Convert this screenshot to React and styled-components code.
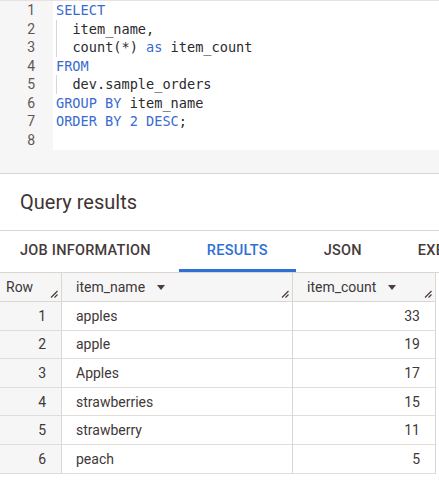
import React from "react";
import styled, { createGlobalStyle } from "styled-components";

const Global = createGlobalStyle`
  html, body { margin: 0; padding: 0; background: #fff; }
  body { font-family: Roboto, "Noto Sans", Arial, sans-serif; color: #3f3838; }
`;

const Page = styled.div`
  width: 439px;
  height: 481px;
  overflow: hidden;
  display: flex;
  flex-direction: column;
`;

const Editor = styled.div`
  display: flex;
  border-top: 1px solid #e6e2e0;
  height: 149px;
`;

const Gutter = styled.div`
  width: 53px;
  background: #f6f6f7;
  box-sizing: border-box;
  padding-right: 18px;
  display: flex;
  flex-direction: column;
  align-items: flex-end;
`;

const LineNo = styled.div`
  height: 18.5px;
  line-height: 18.5px;
  font-family: Roboto, sans-serif;
  font-size: 14px;
  color: #5f5656;
`;

const Code = styled.div`
  flex: 1;
  padding-left: 3px;
  display: flex;
  flex-direction: column;
`;

const CodeLine = styled.div`
  height: 18.5px;
  line-height: 18.5px;
  font-family: "DejaVu Sans Mono", "Liberation Mono", monospace;
  font-size: 13.6px;
  white-space: pre;
  color: #2b2a2e;
`;

const Indent = styled.span`
  display: inline-block;
  vertical-align: top;
  width: 16.4px;
  height: 18.5px;
  border-left: 1px solid #d8d6d6;
  box-sizing: border-box;
`;

const Kw = styled.span`
  color: #3a6bcf;
`;

const Strip = styled.div`
  height: 23px;
  background: #f6f6f7;
  border-bottom: 1px solid #dcd6d0;
`;

const Heading = styled.h2`
  margin: 0;
  height: 57px;
  display: flex;
  align-items: center;
  padding-left: 20px;
  font-size: 20px;
  font-weight: 400;
  color: #3f3434;
  border-bottom: 1px solid #dcd6d0;
  box-sizing: border-box;
`;

const Tabs = styled.div`
  display: flex;
  height: 41px;
  white-space: nowrap;
`;

const Tab = styled.div`
  display: flex;
  align-items: center;
  padding: 0 28px;
  font-size: 14.5px;
  font-weight: 500;
  letter-spacing: 0.25px;
  text-transform: uppercase;
  color: ${(p) => (p.$active ? "#2f6fd6" : "#453b3b")};
  border-bottom: 3px solid ${(p) => (p.$active ? "#2f6fd6" : "transparent")};
  &:first-child { padding-left: 20px; }
`;

const Table = styled.div`
  display: grid;
  grid-template-columns: 62px 231px 143px;
  border-top: 1px solid #dcd6d0;
`;

const HeadCell = styled.div`
  position: relative;
  height: 29px;
  display: flex;
  align-items: center;
  padding-left: ${(p) => p.$pl || 14}px;
  background: #f6f6f7;
  border-right: 1px solid #dcd6d0;
  border-bottom: 1px solid #dcd6d0;
  font-size: 14px;
  color: #3f3838;
  box-sizing: border-box;
`;

const Caret = styled.span`
  display: inline-block;
  margin-left: 12px;
  width: 0;
  height: 0;
  border-left: 4.5px solid transparent;
  border-right: 4.5px solid transparent;
  border-top: 5px solid #4a3c3c;
  margin-top: 1px;
`;

const Grip = styled.svg`
  position: absolute;
  right: 3px;
  bottom: 3px;
`;

const Cell = styled.div`
  height: 28.6px;
  display: flex;
  align-items: center;
  justify-content: ${(p) => (p.$right ? "flex-end" : "flex-start")};
  padding: ${(p) => (p.$right ? "0 15px 0 0" : "0 0 0 14px")};
  background: ${(p) => (p.$shade ? "#f6f6f7" : "#fff")};
  border-right: 1px solid #dcd6d0;
  border-bottom: 1px solid #e2dcd8;
  font-size: 14px;
  color: #3f3838;
  box-sizing: border-box;
`;

const GripIcon = () => (
  <Grip width="8" height="8" viewBox="0 0 8 8">
    <path d="M1 7.5 L7.5 1 M4.5 7.5 L7.5 4.5" stroke="#4a3c3c" strokeWidth="1.2" />
  </Grip>
);

const lines = [
  [<Kw key="k">SELECT</Kw>],
  [<Indent key="i" />, "item_name,"],
  [<Indent key="i" />, "count(*) ", <Kw key="k">as</Kw>, " item_count"],
  [<Kw key="k">FROM</Kw>],
  [<Indent key="i" />, "dev.sample_orders"],
  [<Kw key="k">GROUP BY</Kw>, " item_name"],
  [<Kw key="k">ORDER BY</Kw>, " ", <Kw key="n">2</Kw>, " ", <Kw key="d">DESC</Kw>, ";"],
  [""],
];

const rows = [
  ["apples", 33],
  ["apple", 19],
  ["Apples", 17],
  ["strawberries", 15],
  ["strawberry", 11],
  ["peach", 5],
];

export default function App() {
  return (
    <Page>
      <Global />
      <Editor>
        <Gutter>
          {lines.map((_, i) => (
            <LineNo key={i}>{i + 1}</LineNo>
          ))}
        </Gutter>
        <Code>
          {lines.map((l, i) => (
            <CodeLine key={i}>{l}</CodeLine>
          ))}
        </Code>
      </Editor>
      <Strip />
      <Heading>Query results</Heading>
      <Tabs>
        <Tab>Job information</Tab>
        <Tab $active>Results</Tab>
        <Tab>JSON</Tab>
        <Tab>Execution details</Tab>
      </Tabs>
      <Table>
        <HeadCell $pl={6}>
          Row
          <GripIcon />
        </HeadCell>
        <HeadCell>
          item_name<Caret />
          <GripIcon />
        </HeadCell>
        <HeadCell>
          item_count<Caret />
          <GripIcon />
        </HeadCell>
        {rows.map(([name, count], i) => (
          <React.Fragment key={i}>
            <Cell $right $shade>{i + 1}</Cell>
            <Cell>{name}</Cell>
            <Cell $right>{count}</Cell>
          </React.Fragment>
        ))}
      </Table>
    </Page>
  );
}
